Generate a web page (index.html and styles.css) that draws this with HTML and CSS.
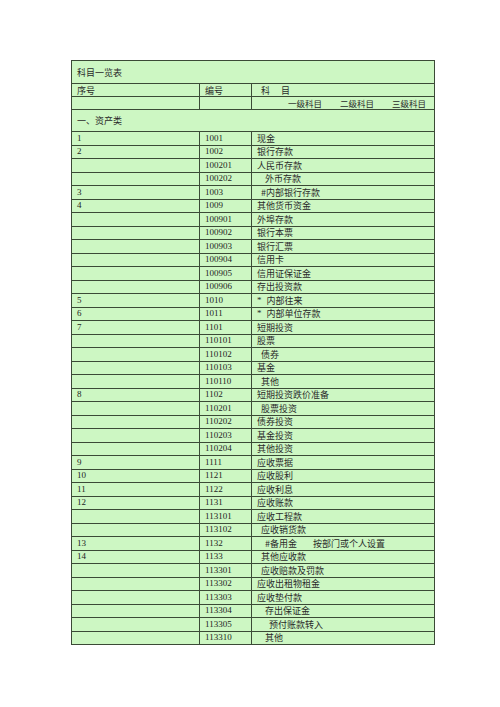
FILE: index.html
```html
<!DOCTYPE html>
<html lang="zh-CN">
<head>
<meta charset="utf-8">
<title>科目一览表</title>
<link rel="stylesheet" href="styles.css">
</head>
<body>
<div class="sheet">
  <div class="row full title"><div class="cell">科目一览表</div></div>
  <div class="row head"><div class="cell">序号</div><div class="cell">编号</div><div class="cell subject">科　 目</div></div>
  <div class="row head"><div class="cell"></div><div class="cell"></div><div class="cell levels"><span>一级科目</span><span>二级科目</span><span>三级科目</span></div></div>
  <div class="row full section"><div class="cell">一、资产类</div></div>

  <div class="row"><div class="cell num">1</div><div class="cell num">1001</div><div class="cell">现金</div></div>
  <div class="row"><div class="cell num">2</div><div class="cell num">1002</div><div class="cell">银行存款</div></div>
  <div class="row"><div class="cell num"></div><div class="cell num">100201</div><div class="cell">人民币存款</div></div>
  <div class="row"><div class="cell num"></div><div class="cell num">100202</div><div class="cell in2">外币存款</div></div>
  <div class="row"><div class="cell num">3</div><div class="cell num">1003</div><div class="cell in1">#内部银行存款</div></div>
  <div class="row"><div class="cell num">4</div><div class="cell num">1009</div><div class="cell">其他货币资金</div></div>
  <div class="row"><div class="cell num"></div><div class="cell num">100901</div><div class="cell">外埠存款</div></div>
  <div class="row"><div class="cell num"></div><div class="cell num">100902</div><div class="cell">银行本票</div></div>
  <div class="row"><div class="cell num"></div><div class="cell num">100903</div><div class="cell">银行汇票</div></div>
  <div class="row"><div class="cell num"></div><div class="cell num">100904</div><div class="cell">信用卡</div></div>
  <div class="row"><div class="cell num"></div><div class="cell num">100905</div><div class="cell">信用证保证金</div></div>
  <div class="row"><div class="cell num"></div><div class="cell num">100906</div><div class="cell">存出投资款</div></div>
  <div class="row"><div class="cell num">5</div><div class="cell num">1010</div><div class="cell"><span class="star">*</span>内部往来</div></div>
  <div class="row"><div class="cell num">6</div><div class="cell num">1011</div><div class="cell"><span class="star">*</span>内部单位存款</div></div>
  <div class="row"><div class="cell num">7</div><div class="cell num">1101</div><div class="cell">短期投资</div></div>
  <div class="row"><div class="cell num"></div><div class="cell num">110101</div><div class="cell">股票</div></div>
  <div class="row"><div class="cell num"></div><div class="cell num">110102</div><div class="cell in1">债券</div></div>
  <div class="row"><div class="cell num"></div><div class="cell num">110103</div><div class="cell">基金</div></div>
  <div class="row"><div class="cell num"></div><div class="cell num">110110</div><div class="cell in1">其他</div></div>
  <div class="row"><div class="cell num">8</div><div class="cell num">1102</div><div class="cell">短期投资跌价准备</div></div>
  <div class="row"><div class="cell num"></div><div class="cell num">110201</div><div class="cell in1">股票投资</div></div>
  <div class="row"><div class="cell num"></div><div class="cell num">110202</div><div class="cell">债券投资</div></div>
  <div class="row"><div class="cell num"></div><div class="cell num">110203</div><div class="cell">基金投资</div></div>
  <div class="row"><div class="cell num"></div><div class="cell num">110204</div><div class="cell">其他投资</div></div>
  <div class="row"><div class="cell num">9</div><div class="cell num">1111</div><div class="cell">应收票据</div></div>
  <div class="row"><div class="cell num">10</div><div class="cell num">1121</div><div class="cell">应收股利</div></div>
  <div class="row"><div class="cell num">11</div><div class="cell num">1122</div><div class="cell">应收利息</div></div>
  <div class="row"><div class="cell num">12</div><div class="cell num">1131</div><div class="cell">应收账款</div></div>
  <div class="row"><div class="cell num"></div><div class="cell num">113101</div><div class="cell">应收工程款</div></div>
  <div class="row"><div class="cell num"></div><div class="cell num">113102</div><div class="cell in1">应收销货款</div></div>
  <div class="row"><div class="cell num">13</div><div class="cell num">1132</div><div class="cell in2"><span class="reserve">#备用金</span>按部门或个人设置</div></div>
  <div class="row"><div class="cell num">14</div><div class="cell num">1133</div><div class="cell in1">其他应收款</div></div>
  <div class="row"><div class="cell num"></div><div class="cell num">113301</div><div class="cell in1">应收赔款及罚款</div></div>
  <div class="row"><div class="cell num"></div><div class="cell num">113302</div><div class="cell">应收出租物租金</div></div>
  <div class="row"><div class="cell num"></div><div class="cell num">113303</div><div class="cell">应收垫付款</div></div>
  <div class="row"><div class="cell num"></div><div class="cell num">113304</div><div class="cell in2">存出保证金</div></div>
  <div class="row"><div class="cell num"></div><div class="cell num">113305</div><div class="cell in3">预付账款转入</div></div>
  <div class="row"><div class="cell num"></div><div class="cell num">113310</div><div class="cell in2">其他</div></div>
</div>
</body>
</html>
```

FILE: styles.css
```css
html, body {
  margin: 0;
  padding: 0;
  background: #ffffff;
}

body {
  font-family: "Noto Sans CJK SC", "Liberation Serif", sans-serif;
  font-size: 9px;
  color: #2a2a2a;
}

.sheet {
  box-sizing: border-box;
  width: 364px;
  margin: 60px 0 0 71px;
  border: 1px solid #3b4a36;
  background: #cdf7c3;
}

.row {
  box-sizing: border-box;
  display: grid;
  grid-template-columns: 127px 52px 1fr;
  height: 13.5px;
  border-top: 1px solid #3b4a36;
}

.row:first-child {
  border-top: none;
}

.row.full {
  grid-template-columns: 1fr;
}

.row.title {
  height: 22px;
}

.row.head {
  height: 13px;
}

.row.section {
  height: 22px;
}

.cell {
  box-sizing: border-box;
  display: flex;
  align-items: center;
  padding-left: 5px;
  line-height: 1;
  white-space: pre;
  overflow: hidden;
}

.cell + .cell {
  border-left: 1px solid #3b4a36;
}

.num {
  font-family: "Liberation Serif", "Noto Sans CJK SC", serif;
  font-size: 9px;
  color: #1e1e1e;
}

.subject {
  padding-left: 9px;
}

.levels {
  justify-content: flex-end;
  padding-right: 8px;
  gap: 18px;
  font-size: 8.5px;
}

.in1 { padding-left: 9px; }
.in2 { padding-left: 13px; }
.in3 { padding-left: 17px; }

.star {
  font-family: "Liberation Serif", serif;
  margin-right: 5px;
}

.reserve {
  margin-right: 16px;
}
```
